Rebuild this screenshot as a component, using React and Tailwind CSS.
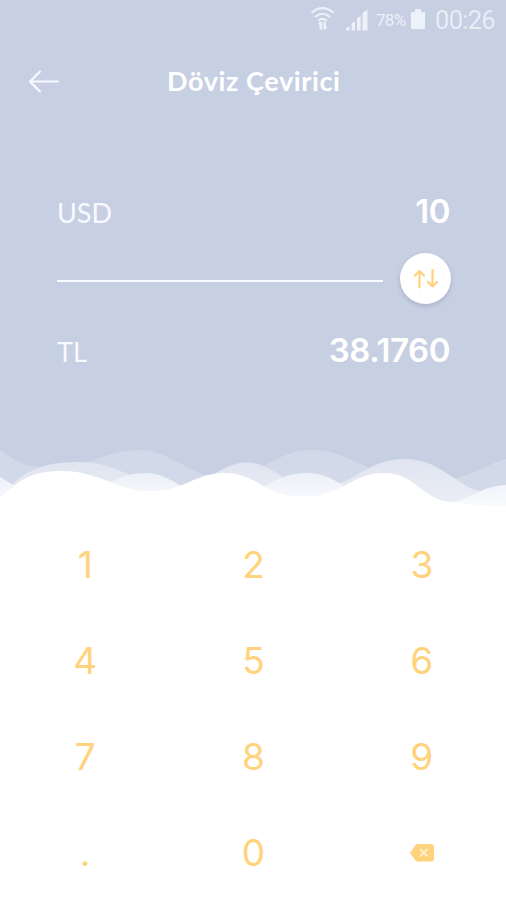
import React from 'react';

function StatusBar() {
  return (
    <div className="flex h-10 items-center pl-[310px] text-[#edf1f9]">
      <svg width="25" height="30" viewBox="0 0 25 30" fill="none" stroke="currentColor" strokeWidth="2.1">
        <path d="M1.500 7.800Q12.500 -1.500 23.500 7.800M5 12Q12.500 5.500 20 12M8.400 15.800Q12.500 12 16.600 15.800" />
        <path d="M10.800 24.500V17M14.600 17v7.500" strokeWidth="2.600" />
        <path d="M8.500 19.500l2.300-2.500M14.600 24l2.300-2.500" strokeWidth="1.500" />
      </svg>
      <svg className="ml-[10px]" width="24" height="24" viewBox="0 0 24 24" fill="currentColor">
        <path d="M1 22.500v-2.500l3.500-1.500v4zM6.500 22.500v-7l3.500-2.300v9.300zM12 22.500v-12l3.700-3v15zM17.500 22.500V5l5-3.500v21z" />
      </svg>
      <span className="ml-[7px] w-[34px] whitespace-nowrap font-['Roboto',sans-serif] text-[17px] leading-none tracking-[-0.7px]">78%</span>
      <svg className="ml-[1px] -mt-[2px]" width="14" height="22" viewBox="0 0 14 22" fill="currentColor">
        <path d="M4 1h6v3h4v17H0V4h4z" />
      </svg>
      <span className="ml-[10px] mt-[1px] whitespace-nowrap font-['Roboto',sans-serif] text-[25.5px] leading-none tracking-[-0.7px] opacity-90">00:26</span>
    </div>
  );
}

function Header() {
  return (
    <header className="flex h-[82px] items-center pl-[28px]">
      <button className="flex h-8 w-8 items-center" aria-label="Geri">
        <svg width="32" height="24" viewBox="0 0 32 24" fill="none" stroke="#f8faff" strokeWidth="2.2" strokeLinecap="round" strokeLinejoin="round">
          <path d="M30 12.500H2M12 2.500L2 12.500l10 10" />
        </svg>
      </button>
      <h1 className="-mt-[1px] ml-[107px] whitespace-nowrap font-['Lato',sans-serif] text-[27px] font-bold leading-none tracking-[0.6px]">Döviz Çevirici</h1>
    </header>
  );
}

function AmountRow({ code, value }) {
  return (
    <div className="flex h-[60px] items-center justify-between">
      <span className="mt-[2px] font-['Lato',sans-serif] text-[27px] leading-none text-[#f8faff]">{code}</span>
      <span className="text-[33px] font-semibold leading-none tracking-[-0.45px]">{value}</span>
    </div>
  );
}

function Waves() {
  return (
    <svg className="block" width="506" height="80" viewBox="0 440 506 80">
      <defs>
        <linearGradient id="middle" gradientUnits="userSpaceOnUse" x1="0" y1="459" x2="0" y2="500">
          <stop stopColor="#dfe4f0" />
          <stop offset="1" stopColor="#eaedf5" />
        </linearGradient>
        <linearGradient id="front" gradientUnits="userSpaceOnUse" x1="0" y1="472" x2="0" y2="506">
          <stop stopColor="#ecf0f7" />
          <stop offset="1" stopColor="#f9fafd" />
        </linearGradient>
      </defs>
      <path fill="#d2d9e8" d="M0 450C15 461 25 467 43 467C75 476 100 450 139 450C165 450 181 467 203 474Q235 480 260 468C280 457 292 450 312 450C335 450 350 460 370 468C405 484 440 484 466 475C482 470 493 462 506 459V520H0Z" />
      <path fill="url(#middle)" d="M0 500L12 485C32 465 54 462 80 462C109 462 125 475 150 482Q185 496 211 476C225 468 233 462.500 248 462.500C265 462.500 277 475 298 485Q330 492 353 477C374 465 385 459 406 459C431 459 445 473 470 488L506 500V520H0Z" />
      <path fill="url(#front)" d="M0 477L15 486L45 500L110 482C125 476 132 473 146 473C163 473 174 483 190 490L250 494C270 484 283 473 306 473C328 473 338 483 353 492L450 503C471 500 480 486 506 485V520H0Z" />
      <path fill="#fff" d="M0 498C19 480 32 471 61 471C101 471 115 491 152 491C185 491 194 473 225 473C258 473 262 496.500 304 496.500C344 496.500 350 473 384 473C417 473 422 501 452 502Q475 506 506 506V521H0Z" />
    </svg>
  );
}

function Keypad() {
  const keys = ['1', '2', '3', '4', '5', '6', '7', '8', '9', '.', '0'];
  return (
    <div className="-mt-[3px] grid h-[383px] w-[506px] grid-cols-3 grid-rows-4 pl-[1px] text-[37px] leading-none text-[#ffd27c]">
      {keys.map((key) => (
        <button key={key} className="flex items-center justify-center">{key}</button>
      ))}
      <button className="flex items-center justify-center" aria-label="Sil">
        <svg className="ml-[2px] mt-[1px]" width="25" height="18" viewBox="0 0 25 18">
          <path fill="#ffd27c" d="M7.500 0H21Q24 0 24 3V14.500Q24 17.500 21 17.500H7.500Q6.500 17.500 5.500 16.500L0 9L5.500 1Q6.500 0 7.500 0Z" />
          <path d="M10 5l7.500 7.500M17.500 5L10 12.500" stroke="#fff5df" strokeWidth="1.700" />
        </svg>
      </button>
    </div>
  );
}

export default function App() {
  return (
    <main className="h-[900px] w-[506px] overflow-hidden bg-white font-['Inter',sans-serif] text-white">
      <section className="h-[440px] bg-[#c7cfe2]">
        <StatusBar />
        <Header />
        <div className="pl-[57px] pr-[56px] pt-[59px]">
          <AmountRow code="USD" value="10" />
          <div className="-mr-[1px] flex h-[79px] items-center justify-between">
            <div className="mt-[1px] h-[2px] w-[326px] bg-[#f8faff]" />
            <button className="-mt-[4px] flex h-[51px] w-[51px] items-center justify-center rounded-full bg-white shadow-[0_2px_4px_rgba(100,110,145,0.3)]" aria-label="Değiştir">
              <svg width="24" height="20" viewBox="0 0 24 20" fill="none" stroke="#ffd27c" strokeWidth="2.2" strokeLinecap="round" strokeLinejoin="round">
                <path d="M5.500 18.500V2M1 6.500l4.500-4.500L10 6.500M18.500 1v16.500M14 13l4.500 4.500L23 13" />
              </svg>
            </button>
          </div>
          <AmountRow code="TL" value="38.1760" />
        </div>
      </section>
      <div className="bg-[#c7cfe2]"><Waves /></div>
      <Keypad />
    </main>
  );
}
